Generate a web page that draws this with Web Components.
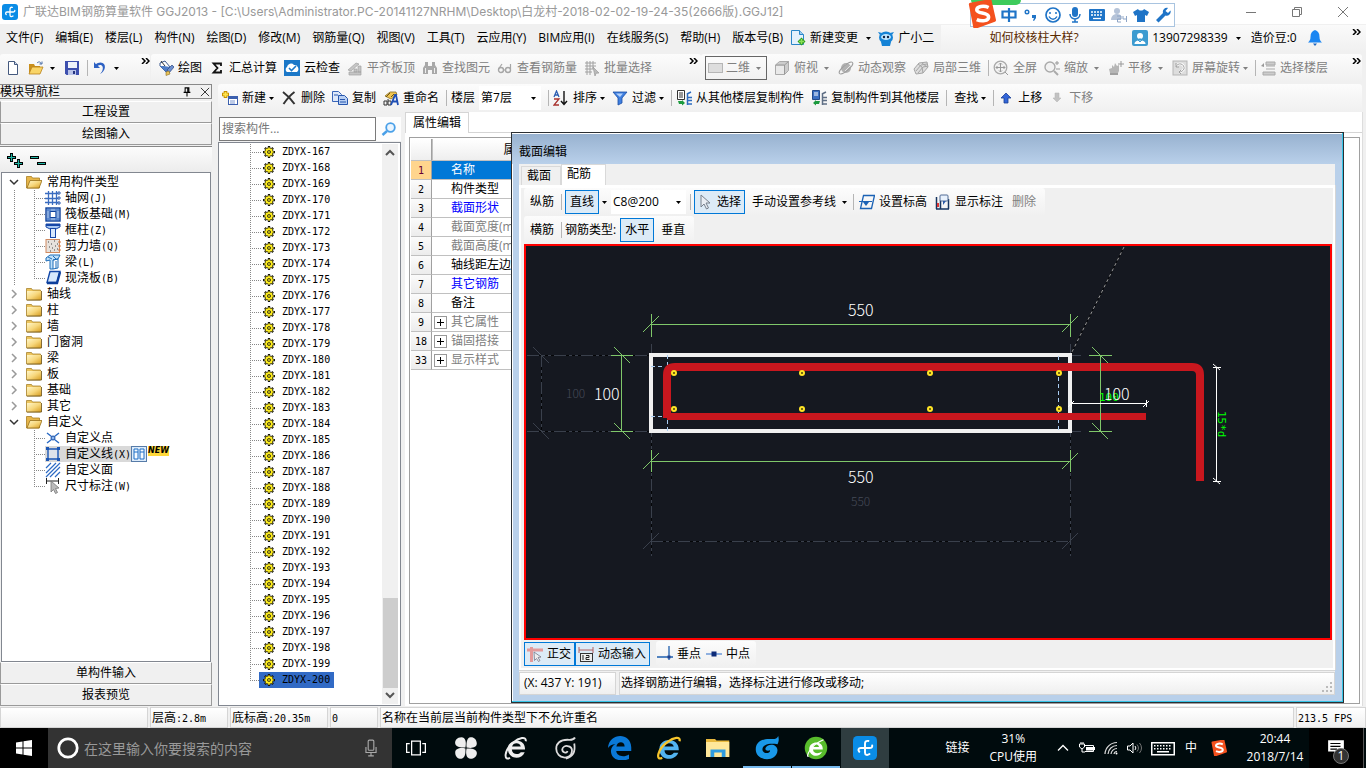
<!DOCTYPE html>
<html lang="zh-CN">
<head>
<meta charset="utf-8">
<title>广联达BIM钢筋算量软件 GGJ2013</title>
<style>
html,body{height:100%;margin:0}
body{font:12px/16px "Open Sans","Noto Sans CJK SC",sans-serif;color:#000;background:#f0f0f0;overflow:hidden}
</style>
</head>
<body>
<ggj-app></ggj-app>
<script>
const BASE = `*{box-sizing:border-box}
button{font:inherit;color:inherit;background:none;border:0;padding:0;margin:0}
a{color:inherit;text-decoration:none}
ul{list-style:none;margin:0;padding:0}
.m{font-family:"DejaVu Sans Mono",monospace;font-size:10px}`;

function define(tag, css, html) {
  customElements.define(tag, class extends HTMLElement {
    constructor() {
      super();
      const root = this.attachShadow({mode: 'open'});
      root.innerHTML = `<style>${BASE}${css}</style>` + (typeof html === 'function' ? html(this) : html);
    }
  });
}

/* ---------- icon library ---------- */
const gear = `<path d="M8 0v16M0 8h16M2.500 2.500l11 11M13.500 2.500l-11 11" stroke="#111" stroke-width="3"/><circle cx="8" cy="8" r="6" fill="#111"/><path d="M8 1.500v13M1.500 8h13M3.500 3.500l9 9M12.500 3.500l-9 9" stroke="#ffee20" stroke-width="1.600"/><circle cx="8" cy="8" r="3.800" fill="none" stroke="#ffee20" stroke-width="2.200"/><circle cx="8" cy="8" r="2.400" fill="#111"/><circle cx="8" cy="8" r="1.200" fill="#ffee20"/>`;
const defs = `<linearGradient id="g" x2="1" y2="1"><stop stop-color="#fff6c8"/><stop offset=".5" stop-color="#f7d77c"/><stop offset="1" stop-color="#d59a1c"/></linearGradient>`;
const logo = `<rect width="16" height="16" rx="3" fill="#0a8ce6"/><path d="M10.300 3.300C8.500 3 8 4 8 5.200V11c0 1.800 1.500 2 3 1M12.800 6.300c.2 1.200-.6 1.700-1.800 1.700H5.200C3.500 8 3.200 9.500 4.200 10.500" stroke="#fff" stroke-width="1.300" fill="none" stroke-linecap="round"/>`;
const sogou = `<path d="M1.500 2.500L12.500.5l2.500 11L4 15.500z" fill="#f4511e" stroke="#f4511e" stroke-width="2" stroke-linejoin="round"/><path d="M11.800 4.300C9 3 5 3.600 5 5.700c0 2.300 6.800 1.200 6.800 4 0 2.300-4 2.800-6.800 1.500" fill="none" stroke="#fff" stroke-width="2"/>`;
const ICONS = {
logo,
newdoc:`<path d="M3.500 1.500h6l3 3v10h-9z" fill="#fff" stroke="#44597e"/><path d="M9.500 1.500v3h3" fill="#cfdcf0" stroke="#44597e"/>`,
open:`<path d="M1 4h5l1 2h5v2H4l-3 6z" fill="#c98f1c"/><path d="M4 7h11l-3 7H1z" fill="#f9d568" stroke="#b9811a" stroke-width=".8"/><path d="M9 3c2-2 4-1 4 1m-1.500 0H14V1.500" fill="none" stroke="#4a6fa8"/>`,
save:`<path d="M1 1h14v14H2.500L1 13.500z" fill="#3d4fae"/><rect x="4" y="2" width="9" height="6" fill="#eef2fb"/><rect x="4" y="10" width="8" height="5" fill="#b9c3e8"/><rect x="9" y="11" width="2" height="3" fill="#26357f"/>`,
undo:`<path d="M2 2v6h6L5.800 5.800C9 3.500 12.500 6 10 11.500L8 14c6-3 7-11 .5-11.500-2 0-3.500.8-4.500 1.800z" fill="#2e62c4"/>`,
brush:`<path d="M2 3l5-2 5 6-4 5-6-6z" fill="#fff" stroke="#3c598f"/><path d="M2 6l6 6 4-5-6-1z" fill="#4d7cc7"/><path d="M3 1l4 5" stroke="#333"/><path d="M9 10l5-5 2 2-5 6z" fill="#6c8fcf" stroke="#2c4680" stroke-width=".7"/><path d="M8 12l3-1 1 3-4 1.500z" fill="#e9c35a" stroke="#8a6d20" stroke-width=".6"/>`,
sigma:`<path d="M12 6V3.500H4.500L8.500 8l-4 4.500H12V10" fill="none" stroke="#111" stroke-width="1.800"/>`,
cloud:`<rect width="16" height="16" fill="#1b78c8"/><path d="M3 12a3 3 0 010-5 4 4 0 017-2 4 4 0 013 7z" fill="#fff"/><path d="M5 8l2.500 2.500L12 6" fill="none" stroke="#1b78c8" stroke-width="1.600"/>`,
slab:`<path d="M1 10l8-7 3 1-8 7zM2 12h12v3H2zM7 9h3v3H7zM11 6h3v6h-3z" fill="#c5c5c5" stroke="#a2a2a2" stroke-width=".7"/>`,
bino:`<path d="M1 8l2-3V2h3v4h4V2h3v3l2 3v6h-5v-4H6v4H1z" fill="#a8a8a8"/><path d="M3.500 8v5M12.500 8v5" stroke="#eee"/>`,
glasses:`<circle cx="4" cy="10" r="2.500" fill="none" stroke="#a6a6a6" stroke-width="1.400"/><circle cx="11" cy="10" r="2.500" fill="none" stroke="#a6a6a6" stroke-width="1.400"/><path d="M1.500 9L5 4M6.500 10h2M13.500 9V4" stroke="#a6a6a6" stroke-width="1.200" fill="none"/>`,
batch:`<path d="M1 3h11M1 6h11M1 9h8M1 12h7M3 1v14M6 1v14M9 1v8" stroke="#a0a0a0"/><path d="M9 7l6 6-3 .2L11 16z" fill="#bbb" stroke="#999" stroke-width=".7"/>`,
rect:`<rect x=".5" y="3.500" width="14" height="9" fill="#ddd" stroke="#b5b5b5"/>`,
cube:`<path d="M1.500 5l4-3.500h9v9l-4 4h-9z" fill="#ccc" stroke="#aaa"/><path d="M1.500 5h9v9.500M10.500 5l4-3.500" stroke="#999" fill="none"/><rect x="2" y="6" width="8" height="8" fill="#e9e9e9"/>`,
planet:`<circle cx="8" cy="8" r="5" fill="#b2b2b2"/><path d="M5 7l3-3M7 11l5-5" stroke="#e6e6e6"/><ellipse cx="8" cy="8" rx="8.500" ry="2.800" transform="rotate(-40 8 8)" fill="none" stroke="#9e9e9e"/>`,
local:`<path d="M1 9l5-6 8-1 1 5-5 6-7 1z" fill="#ddd" stroke="#a5a5a5"/><path d="M3 11l5-6 6-1M5 13l5-6 5-1M5 4l4 3 1 6M9 3l5 4" stroke="#a5a5a5" fill="none"/>`,
full:`<circle cx="7.500" cy="7.500" r="6.300" fill="#f2f2f2" stroke="#aaa" stroke-width="1.300"/><path d="M7.500 3v9M3 7.500h9M6 4.500L7.500 3 9 4.500M6 10.500L7.500 12 9 10.500M4.500 6L3 7.500 4.500 9M10.500 6L12 7.500 10.500 9M12 12l3 3" stroke="#999" fill="none"/>`,
zoomi:`<circle cx="6" cy="7" r="5" fill="#f2f2f2" stroke="#aaa" stroke-width="1.400"/><path d="M10 11l4 4" stroke="#aaa" stroke-width="2"/><path d="M11 3h4M13 1v4M12 9h4" stroke="#999"/>`,
hand:`<path d="M2 13l-1-4 3-1V5l2 2 1-4 2 3 2-1v6l-2 4H4z" fill="#b6b6b6"/><path d="M13 1v6M10 4h6" stroke="#999"/><rect x="2" y="13" width="8" height="2" fill="#a0a0a0"/>`,
rotate:`<rect x="1" y="1" width="14" height="14" fill="#ddd" stroke="#b5b5b5"/><path d="M4 7a4 4 0 118 2c-1 2-3 3-5 3" fill="none" stroke="#fff" stroke-width="2.400"/><path d="M4 7a4 4 0 118 2c-1 2-3 3-5 3M4 3v4h3M9 10l-2 2 2 2" fill="none" stroke="#a0a0a0"/>`,
floors:`<path d="M6 2h9v3H6zM6 6h9M6 9h9M3 12h12v3H3z" fill="#ccc" stroke="#aaa"/><path d="M1 6l3-3v4z" fill="#999"/>`,
newitem:`<path d="M3.500 1v7M0 4.500h7" stroke="#c69000" stroke-width="3.600"/><path d="M3.500 2v5M1 4.500h5" stroke="#ffe34d" stroke-width="1.800"/><rect x="6.500" y="6.500" width="9" height="8" fill="#fff" stroke="#3b5fae"/><rect x="7" y="7" width="8" height="2" fill="#3b5fae"/><path d="M8 11h5M8 13h5" stroke="#7d97cf"/>`,
del:`<path d="M2 2c4 3 8 7 11.500 12M13.500 2C9 5 6 9 2.500 14" stroke="#333" stroke-width="2" fill="none"/>`,
copy:`<path d="M.5 1.500h6l3 3v7h-9z" fill="#dfe9fa" stroke="#3a66b8"/><path d="M6.500 5.500h6l3 3v6h-9z" fill="#b8cff3" stroke="#2756ad"/><path d="M8 9.500h5M8 12h6M2 5h4" stroke="#2756ad"/>`,
rename:`<path d="M2 6l5-4h6l1 3-6 4z" fill="#f0c550" stroke="#8a6d20" stroke-width=".8"/><path d="M8 7l3-3M3 7l4-4" stroke="#6a541a"/><path d="M1 11h3v4H1zM5 9v6h3v-4H5" fill="none" stroke="#333"/><path d="M8 15l4-10h1l2 10M10 11.500h4" fill="none" stroke="#1f4fb5" stroke-width="1.800"/>`,
sort:`<path d="M1 7l2.500-6L6 7M2 5h3" fill="none" stroke="#2d5fb3" stroke-width="1.300"/><path d="M1 9h5l-5 6h5" fill="none" stroke="#a8322e" stroke-width="1.300"/><path d="M11 1v13M8 11l3 3.500 3-3.500" fill="none" stroke="#111" stroke-width="1.400"/>`,
filter:`<path d="M1 2h14L10 8v5l-4 2V8z" fill="#3f7fe0" stroke="#1c4ea3" stroke-width=".8"/><path d="M4 3.500h7L8 7z" fill="#b5d2fa"/>`,
copyfrom:`<path d="M1.500.5h7v9h-7z" fill="#fff" stroke="#333"/><path d="M3 3h4M3 5h4M3 7h4" stroke="#333"/><path d="M11.500 3v12M11 4l4-2M12 7.500h4M12 10.500h4M12 14h4" stroke="#2d6cc0" stroke-width="1.500" fill="none"/><path d="M2 11h4v-1l3 3-3 2.500v-1.500H3z" fill="#1c9a3e"/>`,
copyto:`<path d="M1.500.5h7v9h-7z" fill="#3b6fc2" stroke="#244a8c"/><path d="M3 3h4M3 5h4" stroke="#fff"/><path d="M11.500 3v12M11 4l4-2M12 7.500h4M12 10.500h4M12 14h4" stroke="#5f6f85" stroke-width="1.500" fill="none"/><path d="M9 11H5v-1l-3 3 3 2.500v-1.500h3z" fill="#1c9a3e"/>`,
up:`<path d="M8 3l5 5h-3v5H6V8H3z" fill="#3366d8" stroke="#1a3f96" stroke-width=".8"/>`,
down:`<path d="M8 12l4-4h-2V3H6v5H4z" fill="#c2c2c2" stroke="#b3b3b3" stroke-width=".5"/>`,
change:`<path d="M1.500.5h8l4 4v10h-12z" fill="#e4f1fc" stroke="#2a86c8"/><path d="M9.500.5v4h4" fill="#9ccbf0" stroke="#2a86c8"/><path d="M11.500 7.500l4 4-4 4-4-4z" fill="#2f9e1d"/><path d="M11.500 9v5M9 11.500h5" stroke="#8be058" stroke-width="1.500"/>`,
mascot:`<path d="M2 5L0 2l4 1zM14 5l2-3-4 1z" fill="#1583d6"/><ellipse cx="8" cy="7.500" rx="7" ry="6" fill="#1583d6"/><ellipse cx="8" cy="7" rx="5" ry="3" fill="#bfe6ff"/><circle cx="6" cy="7" r="1.200" fill="#124"/><circle cx="10" cy="7" r="1.200" fill="#124"/><path d="M3 12h10l-1 4H4z" fill="#1583d6"/>`,
user:`<rect width="16" height="16" rx="2" fill="#3d9bd0"/><circle cx="8" cy="6" r="3" fill="#fff"/><path d="M2.500 14c0-5 11-5 11 0z" fill="#fff"/><path d="M8 8v3M6 10l2 2 2-2" stroke="#3d9bd0" fill="none"/>`,
bell:`<path d="M8 0c3 1 4.500 3 4.500 7 0 3 1 4 2.500 5.500H1C2.500 11 3.500 10 3.500 7c0-4 1.500-6 4.500-7z" fill="#1b86f2"/><path d="M6 13.500h4L8 16z" fill="#1b66c2"/>`,
pin:`<path d="M5.500 2.500h5v6h-5zM9 2.500v6M3.500 8.500h9M8 9v5" fill="none" stroke="#000" stroke-width="1.400"/>`,
close:`<path d="M2.500 2.500l11 11M13.500 2.500l-11 11" stroke="#333" stroke-width="1.300"/>`,
plusplus:`<path d="M4.500 1v9M0 5.500h9M11.500 7v9M7 11.500h9" stroke="#000" stroke-width="3"/><path d="M4.500 2v7M1 5.500h7M11.500 8v7M8 11.500h7" stroke="#1fb5a4" stroke-width="1.200"/>`,
minusminus:`<path d="M0 5.500h9M7 11.500h9" stroke="#000" stroke-width="3"/><path d="M1 5.500h7M8 11.500h7" stroke="#1fb5a4" stroke-width="1.200"/>`,
folder:`${defs}<path d="M.5 2.500h5l1 1.500h8v10h-14z" fill="#ecc45c" stroke="#a8842e" stroke-width=".8"/><path d="M1 5h14.500v9H1z" fill="url(#g)"/><path d="M1 14h14.500V5" fill="none" stroke="#6a5118" stroke-width=".8"/>`,
folderopen:`${defs}<path d="M.5 2.500h5l1 1.500h7v10h-13z" fill="#e7b64a" stroke="#a87e22" stroke-width=".8"/><path d="M4 6.500h12l-3 7.500H1z" fill="url(#g)" stroke="#97701a" stroke-width=".8"/>`,
grid:`<path d="M3.500 1v14M7.500 1v14M11.500 1v14M0 3.500h14M0 8.500h14M0 12.500h14" stroke="#3a6cc0" fill="none" stroke-width="1.300"/><path d="M13 2h2v2h-2zM13 7h2v2h-2zM13 12h2v2h-2z" fill="#fff" stroke="#2a5bb0"/>`,
raft:`<rect x="1" y="2" width="14" height="13" fill="#cfe2fa" stroke="#0d3f97" stroke-width="1.400"/><rect x="5" y="5.500" width="6" height="6" fill="#fff" stroke="#0d3f97"/><path d="M3 2v13M13 2v13M1 4h14M1 13h14M5 2v13M11 2v13" stroke="#2b62bb" stroke-width=".9"/>`,
column:`<path d="M1 2h14v3l-4 2H5L1 5z" fill="#a9c8f3" stroke="#1647a8"/><rect x="5.500" y="6.500" width="5" height="9" fill="#d8e8fc" stroke="#1647a8"/><path d="M1 3h14" stroke="#1647a8" stroke-width="2"/>`,
wall:`<rect x="1" y="1.500" width="13.500" height="13" fill="#e6e1dc" stroke="#d08a60"/><path d="M3 4h1M6 6h1M9 3h1M12 6h1M4 9h1M7 10h1M10 8h1M12 11h1M5 13h1M9 12h1" stroke="#444"/><path d="M13 4h3M13 8h3M13 12h3" stroke="#d8763c"/>`,
beam:`<path d="M1 4l4-3h10l-2 4-5 1v9H5V6L1 7z" fill="#bfe0fa" stroke="#1c6cb8"/><path d="M8 6l5-1v9l-5 1M3 3l4 2M8 2l3 3M11 7v7" stroke="#1c6cb8" fill="none"/>`,
plate:`<path d="M5 1.500h10l-3 11H2z" fill="#d6e8fc" stroke="#1348a8" stroke-width="1.400"/><path d="M2 13h10l3-11" stroke="#0c3f9c" stroke-width="2.400" fill="none"/>`,
point:`<path d="M2 3l4.500 3.500M14 3L9.500 6.500M2 13l4.500-3.500M14 13L9.500 9.500" stroke="#2a6ac4" stroke-width="1.400"/><circle cx="8" cy="8" r="2" fill="#8ab6f0" stroke="#1448a0"/>`,
line:`<path d="M3 3h10v10H3z" fill="#dfe3ea" stroke="#1c57b5" stroke-width="1.400"/><path d="M1 1h3v3H1zM12 1h3v3h-3zM1 12h3v3H1zM12 12h3v3h-3z" fill="#1c57b5"/>`,
face:`<path d="M1 6l5-5M1 11L11 1M1 15L15 1M5 15L15 5M10 15l5-5" stroke="#2c6ac4" stroke-width="1.200"/>`,
dimension:`<path d="M1.500 0v6M13.500 0v6M2 3h12" stroke="#222"/><path d="M6 3l8 7-3.500.5 2 4-2 1-2-4L6 14z" fill="#bbb" stroke="#777" stroke-width=".8"/>`,
table2:`<rect x=".5" y=".5" width="15" height="15" fill="#dcebfa" stroke="#567ba8"/><path d="M3 3h4v10H3zM9 3h4v10H9zM3 6h4M9 6h4" fill="#f5faff" stroke="#1e6fc6"/>`,
gear,
search:`<circle cx="9.500" cy="6.500" r="4.300" fill="#eaf5ff" stroke="#4aa0e8" stroke-width="1.800"/><path d="M6 10l-4.500 4" stroke="#4aa0e8" stroke-width="2.400"/>`,
cursor:`<path d="M4 1v12l3-3 2.500 5 2-1-2.500-5h4z" fill="#e9eef4" stroke="#77808c"/>`,
level:`<path d="M4.500 1.500h11l-3 13h-11z" fill="none" stroke="#1b62b5" stroke-width="1.300"/><path d="M0 7.500h13" stroke="#1b62b5"/><path d="M4 8h6l-3 4z" fill="#1b62b5"/>`,
marks:`<path d="M1.500 3v12M5.500 6v9M13.500 5v10M1 15h13" stroke="#16345f" stroke-width="1.500"/><path d="M3 9v4" stroke="#d33" stroke-width="2"/><rect x="5" y="1" width="8" height="6" rx="1" fill="#e8f1fc" stroke="#506a94"/><path d="M8 7v4l3-4" fill="#2c5aa5"/>`,
ortho:`<path d="M0 4h16M4.500 1v15" stroke="#e39a9a" stroke-width="3"/><path d="M7 6l7 5-3 .5 2 3-1.500 1-2-3-2 2z" fill="#eee" stroke="#778" stroke-width=".8"/>`,
dyn:`<path d="M1 1v6M15 1v6M1 4h14" stroke="#b26060"/><rect x="2.500" y="7.500" width="12" height="8" fill="#eee" stroke="#333"/><path d="M5 9v5M8 9.500h3v2H8v2h3.500" fill="none" stroke="#222"/>`,
perp:`<path d="M0 11h16M12 0v14" stroke="#1e5fae" stroke-width="1.300"/><rect x="10.500" y="9.500" width="3" height="3" fill="#1e3f8e"/>`,
mid:`<path d="M0 8h16" stroke="#6c98d8" stroke-width="1.400"/><rect x="5.500" y="5.500" width="5" height="5" fill="#0d2b78"/>`,
win:`<path d="M0 2.400L6.500 1.500v6H0zM7.500 1.300L16 0v7.500H7.500zM0 8.500h6.500v6L0 13.600zM7.500 8.500H16V16l-8.500-1.300z" fill="#fff"/>`,
ring:`<circle cx="8" cy="8" r="6.700" fill="none" stroke="#fff" stroke-width="2"/>`,
mic:`<rect x="5.500" y="1" width="5" height="9" rx="1" fill="none" stroke="#aaa"/><path d="M3.500 7v5h9V7M8 12v3M5.500 15h5" fill="none" stroke="#aaa"/>`,
taskview:`<path d="M4.500 2.500h7v11h-7zM3 4.500H.5v7H3M13 4.500h2.500v7H13" fill="none" stroke="#fff"/>`,
flower:`<g fill="#eee"><path d="M7.600 7.600C8.500 4 7.500.8 5 .8 2 .8.500 3 .800 5c.300 2.300 3.500 2.900 6.800 2.600z"/><path d="M8.400 7.600C12 8.500 15.200 7.500 15.200 5c0-3-2.200-4.500-4.200-4.200C8.700 1.100 8.100 4.300 8.400 7.600z"/><path d="M8.400 8.400C7.500 12 8.500 15.200 11 15.200c3 0 4.500-2.200 4.200-4.200-.3-2.300-3.500-2.900-6.800-2.600z"/><path d="M7.600 8.400C4 7.500.8 8.500.8 11c0 3 2.200 4.500 4.200 4.200 2.300-.3 2.900-3.500 2.600-6.800z"/></g>`,
ewhite:`<path d="M14 9H5.200c.2 3.600 4.500 3.800 6 1.800h2.600C11.500 16.500 2.600 15.500 2.600 8.500 2.600 1.500 14.500 1 14 9zM5.400 7h5.800C10.700 4 5.900 4 5.400 7z" fill="#eee"/><path d="M4 14.500C0 17-.5 10 6 4.500 10 1 15 0 14.500 3.500" fill="none" stroke="#eee" stroke-width="1.300"/>`,
swirl:`<path d="M14 1c-1 2-3 1.500-5 1.500C4 2.500 1.500 5 1.500 8.500c0 7 10 8 10.500 1.500.2-4-6-4.500-6.500-1 0 2 3 3 3.500 1M13.500 5c1 6-1 9-5.500 10" fill="none" stroke="#ddd" stroke-width="1.200"/>`,
edge:`<path d="M0 8C.5-2 15-3 15.500 7.500V10H5.500c.3 3.500 5 4.500 8.500 2.300v3C8 18 1.500 15 2 9.500c.2-2 1.500-3.500 3-4.200C2.500 5.500 1 6.500 0 8zm5.600-1h5.500C11 3 6 3.500 5.600 7z" fill="#0a78d7"/>`,
ie:`<path d="M14.500 9.500H5c.2 3.700 4.700 4.200 6.200 1.700h3C11.500 17.500 1.300 16.300 1.600 8.500 1.900.5 15 .8 14.500 9.500zM5 7h6.200C10.700 4 5.500 4 5 7z" fill="#52b4f0"/><path d="M3.500 14.500C-1 17 0 9 7 4c4-3 9-4 8-.5" fill="none" stroke="#f6c52c" stroke-width="1.500"/>`,
files:`<path d="M0 2h6l1 1h8.500v11H0z" fill="#e9b93e"/><path d="M0 4h15.500v10H0z" fill="#ffe79a"/><path d="M3 14V9h10v5h-2.500v-3h-5v3z" fill="#2f9ce0"/>`,
glodon:`<path d="M15.500 0c-1 2.500-3 2-6 2C4 2 .5 4.500.5 9c0 8 14 9 14.500.5 0-4-6-5-8-1.500-.5 2 2 2 3 1.500.5 2-4 3-5 0C4.500 6 9 4.500 15 5.500 16 3.500 16 2 15.500 0z" fill="#1998e8"/>`,
egreen:`<circle cx="8" cy="8" r="7.500" fill="#58bc2c"/><path d="M12.500 9H6c.2 2.800 3.500 3 6 1.500-1.500 4.300-8.500 3.500-8.500-2C3.500 3 13 2.500 12.500 9zM6 7.300h4C9.500 5 6.300 5 6 7.300z" fill="#fff"/><path d="M3 13.500C1 14.500 4 6 13 2.500" fill="none" stroke="#fff" stroke-width=".8"/>`,
chev:`<path d="M3 10.500l5-5 5 5" fill="none" stroke="#fff" stroke-width="1.300"/>`,
battery:`<path d="M5.500 5.500h9v6H6M15.500 7v3" fill="none" stroke="#fff"/><rect x="7" y="7" width="7" height="3.500" fill="#fff"/><path d="M.5 4h5v3L3 9 .5 7zM2 2v2M4 2v2M3 9v3h3" fill="none" stroke="#fff"/>`,
wifi:`<path d="M2 14A12 12 0 0114 2.500M5 14A9 9 0 0114 5.500M8 14a6 6 0 016-5.500M11 14a3 3 0 013-2.500" fill="none" stroke="#ddd" stroke-width="1.200"/><circle cx="13.500" cy="13.500" r="1" fill="#fff"/>`,
volume:`<path d="M.5 6h2.500L6 3v10L3 10H.5z" fill="none" stroke="#fff"/><path d="M8 6a3 3 0 010 4" fill="none" stroke="#fff"/><path d="M10 4.500a5 5 0 010 7M12.500 3a8 8 0 010 10" fill="none" stroke="#777"/>`,
keyboard:`<path d="M.5 4.500h15v8H.5z" fill="none" stroke="#fff"/><path d="M2 6.500h12M2 8.500h12" stroke="#fff" stroke-dasharray="1 1"/><path d="M4 10.500h8" stroke="#fff"/>`,
sogou,
note:`<path d="M1 1h14v10H9l-2.500 3v-3H1z" fill="#fff"/><path d="M3 4h9M3 6.500h9M3 9h6" stroke="#000"/>`,
zhong:`<path d="M1.500 4.500h13v6h-13zM8 1v14" fill="none" stroke="#1f74c7" stroke-width="2.200"/>`,
punct:`<circle cx="4" cy="5" r="1.800" fill="none" stroke="#1f74c7" stroke-width="1.400"/><path d="M9 8h4v3l-2 3-1-.5 1-2.500H9z" fill="#1f74c7"/>`,
smile:`<circle cx="8" cy="8" r="7" fill="none" stroke="#1f74c7" stroke-width="1.700"/><path d="M5 5v2M11 5v2M4 9.500c2 3.500 6 3.500 8 0" fill="none" stroke="#1f74c7" stroke-width="1.500"/>`,
micblue:`<rect x="5" y="0" width="6" height="10" rx="3" fill="#1f74c7"/><path d="M3 7c0 6.500 10 6.500 10 0M8 12v3M5 15h6" fill="none" stroke="#1f74c7" stroke-width="1.500"/>`,
kbblue:`<rect y="2" width="16" height="12" rx="1" fill="#1f74c7"/><path d="M2 5h12M2 8h12" stroke="#fff" stroke-width="1.300" stroke-dasharray="2 1"/><path d="M4 11.500h8" stroke="#fff" stroke-width="1.300"/>`,
person:`<circle cx="6" cy="4" r="3" fill="#b5c3d8"/><path d="M0 13c0-7 9-7 10-4v4z" fill="#b5c3d8"/><path d="M6 9h4v3H6.500v3H10M12 9v3h3.500M15.500 9v6" fill="none" stroke="#8ea5c6"/>`,
shirt:`<path d="M5 2c1 2 5 2 6 0l5 3-2 4-2-1v7H4V8L2 9 0 5z" fill="#1f74c7"/>`,
wrench:`<path d="M1 13l7-7c-1-3 2-6 5-5l-2.500 3L13 6l2.500-2.500c1 3-2 6-5 5l-7 7z" fill="#1f74c7"/>`
};
define('app-icon', `:host{display:block;flex:none;width:var(--s,16px);height:var(--s,16px)}svg{display:block;width:100%;height:100%}`,
  el => `<svg viewBox="0 0 16 16" aria-hidden="true">${ICONS[el.getAttribute('name')] || ''}</svg>`);

const ARROW = `<svg class="arrow" width="5" height="3" viewBox="0 0 5 3" aria-hidden="true"><path d="M0 0h5L2.500 3z" fill="currentColor"/></svg>`;

/* ---------- toolbar parts ---------- */
define('tool-button', `:host{display:flex;flex:none}
button{display:flex;align-items:center;height:24px;white-space:nowrap}
app-icon{margin-right:4px}
.bare app-icon{margin-right:0}
:host([disabled]) button{color:#808080}
.text{padding:0 3px}
.text.drop{padding-right:0}
.pad{padding:0 2px}
.boxed,.boxed.text.drop{padding:0 4px;border:1px solid #0078d7;background:#dcebf7}
.boxed.pic{padding:0 3px 0 2px}
.arrow{display:block;margin:0 0 0 3px}
:host([drop=wide]) .arrow{margin:0 2px 0 6px}
:host([split]) .arrow{align-self:center}`,
  el => {
    const has = n => el.hasAttribute(n), icon = el.getAttribute('icon');
    const cls = [icon ? 'pic' : 'text', ...['bare', 'drop', 'pad', 'boxed'].filter(has)].join(' ');
    return `<button type="button" class="${cls}" ${has('disabled') ? 'disabled' : ''} ${has('label') ? `aria-label="${el.getAttribute('label')}"` : ''}>${icon ? `<app-icon name="${icon}"></app-icon>` : ''}<slot></slot>${has('drop') && !has('split') ? ARROW : ''}</button>${has('split') ? ARROW : ''}`;
  });
define('tool-sep', `:host{display:block;flex:none;width:1px;height:16px;background:#b5b5b5;margin-right:var(--sepgap,-3px)}`, '');
define('tool-more', `:host{display:block;flex:none;margin-left:auto;align-self:flex-start;padding-top:4px}svg{display:block}`,
  `<svg width="9" height="6" viewBox="0 0 9 6"><path d="M1 0l3 3-3 3M5 0l3 3-3 3" fill="none" stroke="#000" stroke-width="1.500"/></svg>`);
define('tool-strip', `:host{display:flex;align-items:center;gap:var(--gap,7px);min-width:0;background:linear-gradient(#fcfcfc,#f0f0f0);border-radius:3px;overflow:hidden}`, '<slot></slot>');
define('combo-box', `:host{display:block;flex:none}
label{display:flex;align-items:center;gap:4px}
.box{display:flex;align-items:center;height:24px;width:var(--w,62px);background:#fff;padding-right:5px}
:host([framed]) .box{background:none;border:1px solid #666;color:#808080;padding-left:2px}
select{appearance:none;border:0;background:none;font:inherit;color:inherit;padding:0 0 0 2px;margin:0;flex:1;min-width:0;height:22px;outline:0}
.arrow{display:block}`,
  el => `<label>${el.getAttribute('label') || ''}<span class="box">${el.getAttribute('icon') ? `<app-icon name="${el.getAttribute('icon')}"></app-icon>` : ''}<select aria-label="${el.getAttribute('name')}"><option>${el.getAttribute('value')}</option></select>${ARROW}</span></label>`);

/* ---------- top bars ---------- */
define('title-bar', `:host{display:flex;align-items:center;height:24px;background:#fff;color:#999;padding-left:2px}
h1{font:12px/16px Inter,"Noto Sans CJK SC",sans-serif;margin:0 0 0 5px;flex:1;white-space:nowrap}
button{width:46px;height:22px;display:grid;place-items:center}`,
`<app-icon name="logo"></app-icon><h1>广联达BIM钢筋算量软件 GGJ2013 - [C:\\Users\\Administrator.PC-20141127NRHM\\Desktop\\白龙村-2018-02-02-19-24-35(2666版).GGJ12]</h1>
<button aria-label="最小化"><svg width="10" height="10"><path d="M0 5.500h10" stroke="#777"/></svg></button>
<button aria-label="还原"><svg width="10" height="10"><path d="M.5 2.500h7v7h-7zM2.500 2V.5h7v7H8" fill="none" stroke="#777"/></svg></button>
<button aria-label="关闭"><svg width="10" height="10"><path d="M0 0l10 10M10 0L0 10" stroke="#777"/></svg></button>`);
define('menu-bar', `:host{display:flex;height:28px;align-items:center;white-space:nowrap}
nav{display:flex;gap:7px;padding:0 7px 0 6px;align-items:center}
.menus{display:flex;gap:12px}
.grp{display:flex;align-items:center;gap:4px;height:27px}
.drop{display:flex;align-items:center;gap:8px}
.tip{flex:1 1 187px;justify-content:center;color:#5a2a00;background:linear-gradient(#fafafa,#f0f0f0)}
.acct{flex:1 1 240px;padding:0 5px;background:linear-gradient(#fafafa,#f0f0f0);gap:10px}
.acct span{display:flex;align-items:center;gap:4px}`,
`<nav><div class="menus">${['文件(F)','编辑(E)','楼层(L)','构件(N)','绘图(D)','修改(M)','钢筋量(Q)','视图(V)','工具(T)','云应用(Y)','BIM应用(I)','在线服务(S)','帮助(H)','版本号(B)'].map(t => `<a href="#">${t}</a>`).join('')}</div>
<span class="grp"><app-icon name="change"></app-icon><a href="#" class="drop">新建变更 ${ARROW}</a></span><span class="grp"><app-icon name="mascot"></app-icon><a href="#">广小二</a></span></nav>
<div class="grp tip"><a href="#">如何校核柱大样?</a></div>
<div class="grp acct"><span><app-icon name="user"></app-icon><a href="#" class="drop">13907298339 ${ARROW}</a></span><a href="#">造价豆:0</a><app-icon name="bell"></app-icon><tool-more></tool-more></div>`);
define('main-tools', `:host{display:flex;height:32px;padding:2px 4px 0 0}
tool-strip{height:28px}
.a{flex:0 0 150px;padding-left:5px}.b{flex:0 0 550px;padding:0 3px 0 7px;margin-left:1px}.c{flex:1;padding:0 1px 0 4px}`,
`<tool-strip class="a"><tool-button icon="newdoc" bare label="新建"></tool-button><tool-button icon="open" bare drop="wide" label="打开"></tool-button><tool-button icon="save" bare label="保存"></tool-button><tool-sep></tool-sep><tool-button icon="undo" bare drop="wide" label="撤销"></tool-button><tool-more></tool-more></tool-strip>
<tool-strip class="b"><tool-button icon="brush">绘图</tool-button><tool-button icon="sigma">汇总计算</tool-button><tool-button icon="cloud">云检查</tool-button><tool-button icon="slab" disabled>平齐板顶</tool-button><tool-button icon="bino" disabled>查找图元</tool-button><tool-button icon="glasses" disabled>查看钢筋量</tool-button><tool-button icon="batch" disabled>批量选择</tool-button><tool-more></tool-more></tool-strip>
<tool-strip class="c"><combo-box framed icon="rect" name="视图模式" value="二维"></combo-box><tool-button icon="cube" disabled drop="wide">俯视</tool-button><tool-button icon="planet" disabled>动态观察</tool-button><tool-button icon="local" disabled>局部三维</tool-button><tool-sep></tool-sep><tool-button icon="full" disabled>全屏</tool-button><tool-button icon="zoomi" disabled drop="wide">缩放</tool-button><tool-button icon="hand" disabled drop="wide">平移</tool-button><tool-button icon="rotate" disabled drop>屏幕旋转</tool-button><tool-sep></tool-sep><tool-button icon="floors" disabled>选择楼层</tool-button><tool-more></tool-more></tool-strip>`);

/* ---------- navigation ---------- */
const leaf = (icon, text, key = '') => `<li><app-icon name="${icon}"></app-icon><a href="#">${text}${key && `<span class="m">(${key})</span>`}</a></li>`;
const branch = (text, kids, cls = '') => `<li class="top"><div class="row"><svg class="tw" width="10" height="10" aria-hidden="true"><path d="${kids ? 'M1 3l4 4 4-4' : 'M3 1l4 4-4 4'}" fill="none" stroke="${kids ? '#333' : '#999'}" stroke-width="1.500"/></svg><app-icon name="${kids ? 'folderopen' : 'folder'}"></app-icon><a href="#">${text}</a></div>${kids ? `<ul class="${cls}">${kids}</ul>` : ''}</li>`;
define('type-tree', `:host{display:block;flex:1;min-height:0;background:#fff;border:1px solid #828790;margin:0 1px 0 1px;padding-top:1px;overflow:hidden;white-space:nowrap}
.row{display:flex;align-items:center;height:16px;padding-left:7px}
.tw{margin-right:7px}.row a{margin-left:5px}
ul ul{margin-left:12px}
ul .trunk{background:repeating-linear-gradient(#888 0 1px,transparent 1px 2px) 0 0/1px 100% no-repeat}
ul ul li{display:flex;align-items:center;height:16px;margin-left:20px;padding-left:11px;
background:repeating-linear-gradient(#888 0 1px,transparent 1px 2px) 0 0/1px 100% no-repeat,repeating-linear-gradient(90deg,#888 0 1px,transparent 1px 2px) 0 8px/11px 1px no-repeat}
ul ul li:last-child{background-size:1px 8px,11px 1px}
ul ul a{padding-left:4px}
.on{display:flex;align-items:center;background:#d9d9d9;height:16px}
b{font:italic bold 8px/10px "DejaVu Sans",sans-serif;background:#ffd83a;margin:0 0 6px 1px}`,
`<ul>${branch('常用构件类型', leaf('grid','轴网','J') + leaf('raft','筏板基础','M') + leaf('column','框柱','Z') + leaf('wall','剪力墙','Q') + leaf('beam','梁','L') + leaf('plate','现浇板','B'), 'trunk')}
${['轴线','柱','墙','门窗洞','梁','板','基础','其它'].map(t => branch(t)).join('')}
${branch('自定义', leaf('point','自定义点') + `<li><span class="on"><app-icon name="line"></app-icon><a href="#">自定义线<span class="m">(X)</span></a></span><app-icon name="table2"></app-icon><b>NEW</b></li>` + leaf('face','自定义面') + leaf('dimension','尺寸标注','W'))}</ul>`);
define('nav-panel', `:host{display:flex;flex-direction:column;width:212px;flex:none}
header{display:flex;align-items:center;height:15px;border:1px solid #888;border-left:0;flex:none}
header span{flex:1;white-space:nowrap}
header app-icon{--s:12px;margin-left:6px}
.tab{display:block;height:22px;border:1px solid #9a9a9a;border-top-color:#fff;text-align:center;background:#f0f0f0}
.first{margin-top:2px}
.tools{display:flex;gap:7px;align-items:center;height:26px;padding-left:7px;border-top:1px solid #888;background:linear-gradient(#fcfcfc,#ececec);margin-top:1px}`,
`<header><span>模块导航栏</span><app-icon name="pin"></app-icon><app-icon name="close"></app-icon></header>
<button class="tab first">工程设置</button><button class="tab">绘图输入</button>
<div class="tools"><button aria-label="全部展开"><app-icon name="plusplus"></app-icon></button><button aria-label="全部折叠"><app-icon name="minusminus"></app-icon></button></div>
<type-tree></type-tree><button class="tab">单构件输入</button><button class="tab">报表预览</button>`);

/* ---------- component list ---------- */
define('component-list', `:host{display:flex;flex-direction:column;width:183px;flex:none;background:#f0f0f0}
form{display:flex;height:24px;margin:5px 0 1px 1px}
input{flex:1;min-width:0;height:24px;border:1px solid #7a7a7a;background:#fff;font:inherit;padding:0 0 2px 2px;border-radius:0}
input::placeholder{color:#777}
form button{width:25px;display:grid;place-items:center;background:#fdfdfd}
.box{flex:1;min-height:0;display:flex;border:1px solid #828790;background:#fff;overflow:hidden;padding:1px 2px 1px 0}
ul{flex:1;padding-left:31px}
li{display:flex;align-items:center;height:16px;padding-left:9px;background:repeating-linear-gradient(#888 0 1px,transparent 1px 2px) 0 0/1px 100% no-repeat,repeating-linear-gradient(90deg,#888 0 1px,transparent 1px 2px) 0 8px/11px 1px no-repeat}
li:last-child{background-size:1px 8px,9px 1px}
a{display:flex;align-items:center;height:16px;padding:0 4px;gap:7px}
a app-icon{--s:12px}
.sel{background:#316ac5}
.bar{width:16px;display:flex;flex-direction:column;background:#f0f0f0;align-items:center;padding:4px 0}
.thumb{width:15px;height:90px;margin-top:auto;background:#cdcdcd;margin-bottom:2px}`,
`<form onsubmit="return false"><input aria-label="搜索构件" placeholder="搜索构件..."><button aria-label="搜索"><app-icon name="search"></app-icon></button></form>
<div class="box"><ul>${Array.from({length: 34}, (_, i) => `<li><a href="#" class="m ${i === 33 ? 'sel' : ''}"><app-icon name="gear"></app-icon>ZDYX-${167 + i}</a></li>`).join('')}</ul>
<div class="bar"><svg width="10" height="10"><path d="M1 7l4-4 4 4" fill="none" stroke="#555" stroke-width="2"/></svg><div class="thumb"></div><svg width="10" height="10"><path d="M1 3l4 4 4-4" fill="none" stroke="#555" stroke-width="2"/></svg></div></div>`);

/* ---------- property grid ---------- */
const PROPS = [['1','名称','sel'],['2','构件类型',''],['3','截面形状','blue'],['4','截面宽度(mm)','dim'],['5','截面高度(mm)','dim'],['6','轴线距左边线距离(mm)',''],['7','其它钢筋','blue'],['8','备注',''],['9','其它属性','dim plus'],['18','锚固搭接','dim plus'],['33','显示样式','dim plus']];
define('property-grid', `:host{display:flex;flex-direction:column;flex:1;min-width:0;background:#fff;margin:0 3px 0 4px;border-right:1px solid #ddd}
.tabs{display:flex;height:21px;flex:none;border-bottom:1px solid #d5d5d5}
.tabs button{width:64px;height:21px;border:1px solid #d5d5d5;border-bottom:0;background:#fff}
.area{flex:1;min-height:0;margin:4px 2px 2px 4px;border:1px solid #a0a0a0;overflow:hidden;padding:1px}
table{border-collapse:separate;border-spacing:0;table-layout:fixed;width:80%}
th,td{height:19px;padding:0;font-weight:400;border-bottom:1px solid #c0c0c0;white-space:nowrap;overflow:hidden;line-height:16px}
thead th{height:22px;background:linear-gradient(#fff,#eee);border-left:1px solid #c0c0c0}
tbody th{background:linear-gradient(#fbfbfb,#ececec);border-right:1px solid #a0a0a0;text-align:center;color:#000}
thead th:first-child{border-left:0;border-right:1px solid #a0a0a0}
tbody .val{border-left:1px solid #c0c0c0}
.name{display:flex;align-items:center;padding-left:2px}
.name i{flex:none;width:13px;height:13px;margin-right:4px}
.plus i{border:1px solid #999;background:linear-gradient(#000,#000) 2px 5px/7px 1px no-repeat,linear-gradient(#000,#000) 5px 2px/1px 7px no-repeat}
.blue{color:#00f}.dim{color:#808080}
tr.sel th{background:#ffd58d;color:#603}.sel td{background:#0078d7;color:#fff}`,
`<div class="tabs"><button role="tab">属性编辑</button></div><div class="area"><table>
<colgroup><col style="width:21px"><col style="width:190px"><col></colgroup>
<thead><tr><th></th><th scope="col">属性名称</th><th scope="col"></th></tr></thead>
<tbody>${PROPS.map(([n, t, c]) => `<tr class="${c}"><th scope="row"><span class="m">${n}</span></th><td><span class="name"><i></i>${t}</span></td><td class="val"></td></tr>`).join('')}</tbody></table></div>`);

define('list-tools', `:host{display:flex;height:28px;margin:0 4px 0 0;flex:none}tool-strip{flex:1;padding-left:4px}`,
`<tool-strip><tool-button icon="newitem" drop>新建</tool-button><tool-button icon="del">删除</tool-button><tool-button icon="copy">复制</tool-button><tool-button icon="rename">重命名</tool-button><tool-sep></tool-sep><combo-box label="楼层" name="楼层" value="第7层"></combo-box><tool-sep></tool-sep><tool-button icon="sort" drop>排序</tool-button><tool-button icon="filter" drop>过滤</tool-button><tool-sep></tool-sep><tool-button icon="copyfrom">从其他楼层复制构件</tool-button><tool-button icon="copyto">复制构件到其他楼层</tool-button><tool-sep></tool-sep><tool-button drop>查找</tool-button><tool-sep></tool-sep><tool-button icon="up">上移</tool-button><tool-button icon="down" disabled>下移</tool-button></tool-strip>`);

/* ---------- section drawing ---------- */
const slash = (x, y, c) => `<path d="M${x - 8} ${y + 8}L${x + 8} ${y - 8}" stroke="${c}"/>`;
const back = (x, y, c) => `<path d="M${x - 8} ${y - 8}L${x + 8} ${y + 8}" stroke="${c}"/>`;
const G = '#7fc76a', D = '#3a404c';
define('section-canvas', `:host{display:block;flex:1;min-height:0;border:2px solid #f00;background:#151820}
svg{display:block;width:100%;height:100%}
text{font-family:"Noto Sans CJK SC",sans-serif;font-weight:300;font-size:16px;fill:#fff}
.dk{font-size:12px;fill:#454b58}.gr{font-family:"DejaVu Sans Mono",monospace;font-size:11px;fill:#0f0}`,
`<svg viewBox="526 246 804 392" preserveAspectRatio="xMidYMid meet"><g fill="none">
<g stroke="#050608"><path d="M527 355.500H649M527 431.500H649M541.500 355V431M651.500 344V556M1070.500 344V556M651 541.500H1070"/></g>
<g stroke="${D}" stroke-dasharray="12 3 3 3 3 3"><path d="M527 355.500H649M527 431.500H649M541.500 355V431M651.500 344V556M1070.500 344V556M651 541.500H1070"/></g>
<path d="M1072 355.500h9M1072 431.500h9" stroke="${D}"/>
${back(541,355,D)}${back(541,431,D)}${slash(651,541,D)}${slash(1070,541,D)}
<path d="M1124 247L1071 354" stroke="#050608"/><path d="M1124 247L1071 354" stroke="#9a9a9a" stroke-dasharray="3 3"/>
<g stroke="${G}"><path d="M651 324.500H1070M651.500 314v23M1070.500 314v23M651 461.500H1070M651.500 450v22M1070.500 450v22M621.500 355V431M611 355.500h22M611 431.500h22"/></g>
${slash(651,324,G)}${slash(1070,324,G)}${slash(651,461,G)}${slash(1070,461,G)}${back(622,355,G)}${back(622,431,G)}
<rect x="651" y="355" width="419" height="76" stroke="#f0f0f0" stroke-width="4"/>
<path d="M667.500 355v10M667.500 420v11M651 366.500h14M651 416.500h14M1058.500 356v75" stroke="#a9cdf2" stroke-dasharray="4 3"/>
<path d="M1146 416.500H667" stroke="#c8171e" stroke-width="7"/>
<path d="M667 418V375Q667 367 675 367H1192Q1200 367 1200 375V481" stroke="#c8171e" stroke-width="8"/>
<g stroke="${G}"><path d="M1100.500 355V431M1089 355.500h23M1089 431.500h23"/></g>${back(1100,355,G)}${back(1100,431,G)}
<path d="M1072 403.500H1147M1146.500 400v7M1071.500 400v7M1143 407l6-6M1068 407l6-6M1216.500 367V481M1213 367.500h8M1213 481.500h8M1213 364l7 6M1213 478l7 6" stroke="#fff"/></g>
${[674,802,930,1059].map(x => [373,409].map(y => `<circle cx="${x}" cy="${y}" r="3" fill="#ffe525"/><rect x="${x - 1}" y="${y - 1}" width="2" height="2" fill="#776a10"/>`).join('')).join('')}
<text x="848" y="316">550</text><text x="848" y="483">550</text><text class="dk" x="851" y="506">550</text>
<text x="594" y="400">100</text><text class="dk" x="566" y="398">100</text>
<text class="gr" x="1099" y="401">100</text><text x="1104" y="400">100</text>
<text class="gr" transform="translate(1218 411) rotate(90)">15*d</text></svg>`);

define('section-dialog', `:host{display:flex;flex-direction:column;position:absolute;left:511px;right:22px;top:132px;bottom:65px;background:#b9d0ea;border:1px solid #2b2f33;box-shadow:inset -1px -1px #35c5e8,inset 1px 1px #fff;padding:1px 8px 7px 7px}
h2{font:inherit;margin:0 -7px;padding:10px 7px 2px;height:30px;background:linear-gradient(#98b2d0,#b9d0ea)}
.body{flex:1;min-height:0;display:flex;flex-direction:column;background:#f0f0f0}
.tabs{display:flex;align-items:flex-end;height:21px;padding-left:2px;flex:none}
.tabs button{height:19px;width:40px;border:1px solid #d9d9d9;border-bottom:0;padding-left:5px;text-align:left}
.tabs .on{height:21px;width:45px;background:#fff;padding-bottom:2px}
.page{flex:1;min-height:0;display:flex;flex-direction:column;align-items:flex-start;border:2px solid #fff;border-top:3px solid #fff;margin-bottom:2px;padding:0 1px 0 3px;box-shadow:0 1px #d5d5d5,1px 0 #d5d5d5}
tool-strip{--gap:4px;--sepgap:-1px;height:28px;padding:0 6px 0 3px;flex:none}
section-canvas{align-self:stretch}
.snap{display:flex;height:28px;align-items:center;gap:6px;flex:none}
.snap div{display:flex}
.snap tool-strip{--gap:5px;height:26px;padding-left:1px}
.status{display:flex;height:23px;gap:3px;line-height:18px;white-space:nowrap;flex:none}
.status span{border:1px solid #d5d5d5;padding:1px 4px;background:linear-gradient(#fff,#efefef)}
.status span:first-child{width:97px;flex:none}
.status span:last-child{flex:1;padding-left:1px;display:flex;justify-content:space-between}
.status svg{align-self:flex-end;margin-right:-3px}`,
`<h2>截面编辑</h2><div class="body"><div class="tabs" role="tablist"><button role="tab">截面</button><button role="tab" class="on">配筋</button></div>
<div class="page">
<tool-strip><tool-button>纵筋</tool-button><tool-sep></tool-sep><tool-button boxed drop split>直线</tool-button><combo-box name="钢筋规格" value="C8@200" style="--w:75px"></combo-box><tool-sep></tool-sep><tool-button boxed icon="cursor">选择</tool-button><tool-button drop="wide">手动设置参考线</tool-button><tool-sep></tool-sep><tool-button pad icon="level">设置标高</tool-button><tool-button pad icon="marks">显示标注</tool-button><tool-button disabled>删除</tool-button></tool-strip>
<tool-strip><tool-button>横筋</tool-button><tool-sep></tool-sep><span>钢筋类型:</span><tool-button boxed>水平</tool-button><tool-button>垂直</tool-button></tool-strip>
<section-canvas></section-canvas>
<div class="snap"><div><tool-button boxed icon="ortho">正交</tool-button><tool-button boxed icon="dyn">动态输入</tool-button></div><tool-strip><tool-button icon="perp">垂点</tool-button><tool-button icon="mid">中点</tool-button></tool-strip></div>
</div>
<div class="status"><span>(X: 437 Y: 191)</span><span>选择钢筋进行编辑，选择标注进行修改或移动;<svg width="11" height="11"><path d="M8 0h2v2H8zM4 4h2v2H4zM8 4h2v2H8zM0 8h2v2H0zM4 8h2v2H4zM8 8h2v2H8z" fill="#bbb"/></svg></span></div></div>`);

/* ---------- bottom bars ---------- */
define('status-bar', `:host{display:flex;gap:2px;height:22px;flex:none;padding-top:1px;white-space:nowrap;background:#f0f0f0}
span{border:1px solid #d5d5d5;background:linear-gradient(#fff,#f0f0f0);padding:1px 1px;flex:none;line-height:18px}
.a{width:148px}.b{width:78px}.c{width:98px}.d{width:48px}.e{flex:1}.f{width:70px}i{font-style:normal}`,
`<span class="a"></span><span class="b">层高<i class="m">:2.8m</i></span><span class="c">底标高<i class="m">:20.35m</i></span><span class="d"><i class="m">0</i></span><span class="e">名称在当前层当前构件类型下不允许重名</span><span class="f"><i class="m">213.5 FPS</i></span>`);
define('task-bar', `:host{display:flex;height:40px;flex:none;background:#000b0d;color:#fff;align-items:stretch}
.start{width:48px;background:#000}
button{display:grid;place-items:center}
.find{display:flex;align-items:center;width:344px;background:#333;padding:0 12px 0 9px}
.find app-icon{--s:22px}.find .mic{--s:18px}
input{flex:1;min-width:0;border:0;background:none;font:14px/20px "Noto Sans CJK SC",sans-serif;color:#fff;padding:0 0 0 5px;outline:0}
input::placeholder{color:#999}
.apps{display:flex;gap:2px}.pins{display:flex;gap:1px;margin-left:6px}
.apps button,.pins button{width:48px;--s:24px}
.apps .tv{--s:20px}
.run{box-shadow:inset 0 -2px #76b9ed}
.pins .act{background:#2f3d40;box-shadow:none}
.tray{margin-left:auto;display:flex;align-items:center}
.tray button{width:24px;height:40px}
.cpu,.clock{text-align:center;line-height:18px}
.cpu{margin:0 14px 0 20px}.clock{width:68px;margin:0 0 0 6px}
.tray .kb{width:32px;--s:24px}.zh{width:24px;text-align:center}
.tray .ime{width:32px}
.tray .note{position:relative;width:54px;--s:18px;background:#000}
.note b{position:absolute;right:14px;bottom:4px;width:16px;height:16px;border-radius:8px;background:#333;border:1px solid #777;font:12px/14px "Open Sans",sans-serif}
.edge{width:3px;height:40px;border-left:1px solid #555}`,
`<button class="start" aria-label="开始"><app-icon name="win"></app-icon></button>
<div class="find"><app-icon name="ring"></app-icon><input aria-label="搜索" placeholder="在这里输入你要搜索的内容"><app-icon class="mic" name="mic"></app-icon></div>
<div class="apps"><button class="tv" aria-label="任务视图"><app-icon name="taskview"></app-icon></button>${['flower','ewhite','swirl'].map(n => `<button aria-label="${n}"><app-icon name="${n}"></app-icon></button>`).join('')}</div>
<div class="pins">${['edge','ie','files','glodon','egreen','logo'].map((n, i) => `<button class="${i > 2 ? 'run' : ''} ${i === 5 ? 'act' : ''}" aria-label="${n}"><app-icon name="${n}"></app-icon></button>`).join('')}</div>
<div class="tray"><span>链接</span><div class="cpu">31%<br>CPU使用</div>${['chev','battery','wifi','volume'].map(n => `<button aria-label="${n}"><app-icon name="${n}"></app-icon></button>`).join('')}<button class="kb" aria-label="键盘"><app-icon name="keyboard"></app-icon></button><span class="zh">中</span><button class="ime" aria-label="输入法"><app-icon name="sogou"></app-icon></button><div class="clock">20:44<br>2018/7/14</div><button class="note" aria-label="通知"><app-icon name="note"></app-icon><b>1</b></button><span class="edge"></span></div>`);
define('ime-bar', `:host{display:flex;align-items:center;gap:6px;position:absolute;top:3px;right:191px;width:205px;height:24px;background:#fff;border:1px solid #a9c4e0;padding-left:30px}
.s{position:absolute;left:-3px;top:-4px;--s:28px}
.blob{position:absolute;left:0;top:-4px;width:50px;height:5px;background:#3ecb5b;border-radius:0 0 14px 14px}`,
`<span class="blob"></span><app-icon class="s" name="sogou"></app-icon>${['zhong','punct','smile','micblue','kbblue','person','shirt','wrench'].map(n => `<app-icon name="${n}"></app-icon>`).join('')}`);

define('ggj-app', `:host{display:flex;flex-direction:column;height:100vh;position:relative;overflow:hidden}
title-bar,menu-bar,main-tools{flex:none}
.work{flex:1;min-height:0;display:flex;gap:6px}
.right{flex:1;min-width:0;display:flex;flex-direction:column}
.panes{flex:1;min-height:0;display:flex}`,
`<title-bar></title-bar><menu-bar></menu-bar><main-tools></main-tools>
<div class="work"><nav-panel></nav-panel><div class="right"><list-tools></list-tools><div class="panes"><component-list></component-list><property-grid></property-grid></div></div></div>
<status-bar></status-bar><task-bar></task-bar><section-dialog></section-dialog><ime-bar></ime-bar>`);
</script>
</body>
</html>
